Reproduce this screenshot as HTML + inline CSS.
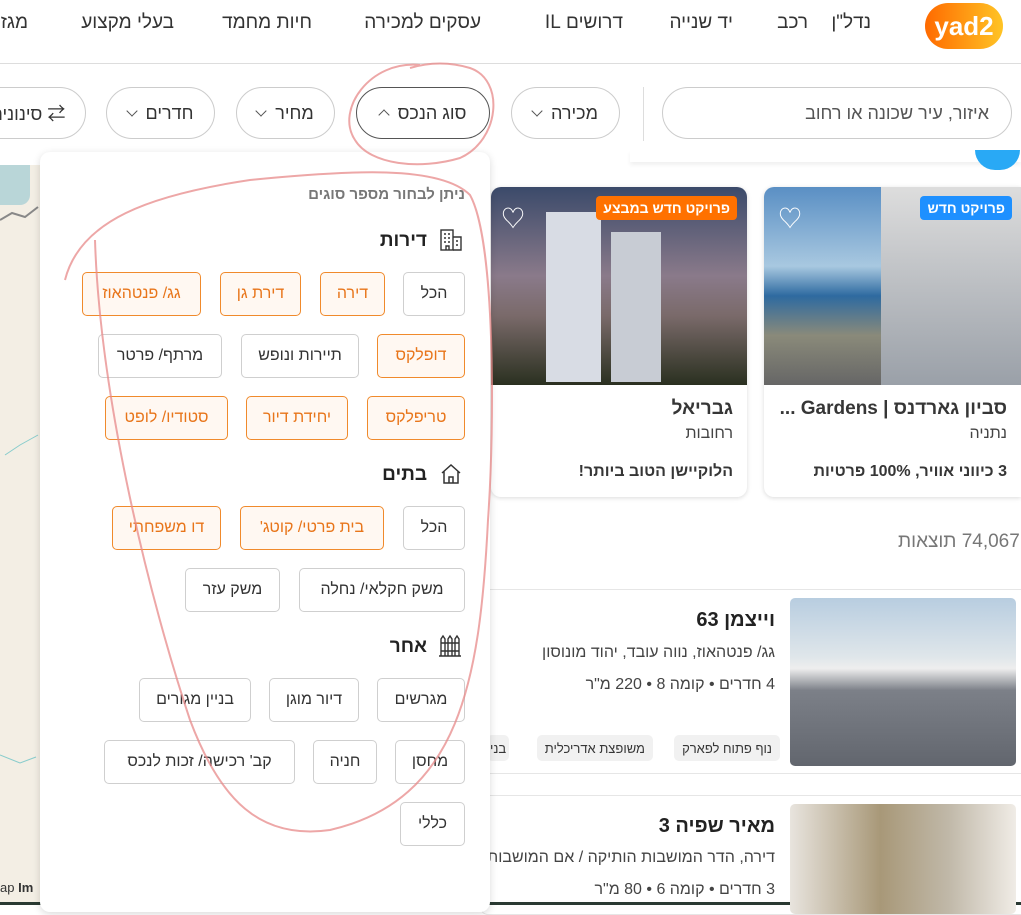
<!DOCTYPE html>
<html><head><meta charset="utf-8"><style>
*{box-sizing:border-box;margin:0;padding:0}
body{width:1021px;height:905px;overflow:hidden;position:relative;background:#fff;font-family:"Liberation Sans","Noto Sans CJK SC",sans-serif;color:#363636;direction:rtl}
.a{position:absolute}
.nav{font-size:19px;color:#333;top:12px;white-space:nowrap}
.pill{position:absolute;top:87px;height:52px;border:1px solid #ccc;border-radius:26px;font-size:18px;display:flex;align-items:center;justify-content:center;gap:10px;color:#333;background:#fff}
.chev{width:8px;height:8px;border-right:1.3px solid #555;border-bottom:1.3px solid #555;transform:rotate(45deg);margin-top:-4px}
.up{transform:rotate(-135deg);margin-top:4px}
.b{position:absolute;height:44px;border:1px solid #cfcfcf;border-radius:5px;font-size:16px;display:flex;align-items:center;justify-content:center;color:#333;background:#fff;white-space:nowrap}
.o{border-color:#f08a2c;color:#e8751a;background:#fff8f2}
.h{position:absolute;font-size:19px;font-weight:bold;color:#222}
.card{position:absolute;top:187px;height:310px;border-radius:10px;background:#fff;box-shadow:0 1px 5px rgba(0,0,0,.15);overflow:hidden}
.tag{position:absolute;top:9px;color:#fff;font-size:14px;font-weight:bold;padding:4px 7px;border-radius:4px}
.chip{position:absolute;top:735px;height:26px;background:#f1f1f1;border-radius:5px;font-size:13px;padding:0 8px;display:flex;align-items:center;white-space:nowrap}
</style></head><body>
<!-- map -->
<div class="a" style="left:0;top:165px;width:40px;height:740px;background:#f3eee4"></div>
<div class="a" style="left:0;top:165px;width:30px;height:40px;background:#b9d6d8;border-radius:0 0 10px 0"></div>
<svg class="a" style="left:0;top:165px" width="40" height="740"><path d="M0 55 L12 48 L25 52 L38 42" stroke="#888" stroke-width="2" fill="none"/><path d="M5 290 L20 280 L38 270" stroke="#8cc" fill="none"/><path d="M0 590 L20 598 L36 592" stroke="#8cc" fill="none"/></svg>
<div class="a" style="left:0;top:880px;font-size:13px;color:#333">ap <b>Im</b></div>
<div class="a" style="left:0;top:902px;width:1021px;height:3px;background:#2a3a33"></div>
<!-- top nav -->
<div class="a" style="left:0;top:63px;width:1021px;height:1px;background:#ddd"></div>
<div class="a" style="left:925px;top:3px;width:78px;height:46px;border-radius:23px;background:linear-gradient(90deg,#ff6a00,#ffc425);color:#fff;font-weight:bold;font-size:26px;direction:ltr;display:flex;align-items:center;justify-content:center">yad2</div>
<div class="a nav" style="right:150px">נדל"ן</div>
<div class="a nav" style="right:213px">רכב</div>
<div class="a nav" style="right:288px">יד שנייה</div>
<div class="a nav" style="right:398px">דרושים IL</div>
<div class="a nav" style="right:540px">עסקים למכירה</div>
<div class="a nav" style="right:709px">חיות מחמד</div>
<div class="a nav" style="right:847px">בעלי מקצוע</div>
<div class="a nav" style="right:993px">מגזין</div>
<!-- filters -->
<div class="pill" style="left:662px;width:350px;justify-content:flex-start;padding-right:22px;color:#555">איזור, עיר שכונה או רחוב</div>
<div class="a" style="left:643px;top:87px;width:1px;height:54px;background:#ddd"></div>
<div class="pill" style="left:511px;width:109px">מכירה <span class="chev"></span></div>
<div class="pill" style="left:356px;width:134px;border-color:#555">סוג הנכס <span class="chev up"></span></div>
<div class="pill" style="left:236px;width:99px">מחיר <span class="chev"></span></div>
<div class="pill" style="left:106px;width:109px">חדרים <span class="chev"></span></div>
<div class="pill" style="left:-30px;width:116px">⇄ סינונים</div>
<div class="a" style="left:630px;top:150px;width:391px;height:12px;box-shadow:0 3px 4px rgba(0,0,0,.06)"></div>
<div class="a" style="left:975px;top:150px;width:45px;height:20px;border-radius:0 0 20px 20px;background:#29a9f5"></div>
<!-- cards -->
<div class="card" style="left:764px;width:257px;border-radius:10px 0 0 10px">
<div style="height:198px;background:linear-gradient(180deg,#5a8fc4 0%,#a8c8e0 40%,#2e6aa0 55%,#8a8a7a 75%,#666 100%)"></div>
<div class="a" style="right:0;top:0;width:140px;height:198px;background:linear-gradient(180deg,#ddd,#9aa0a8)"></div>
<div class="tag" style="right:9px;background:#1e90ff">פרויקט חדש</div>
<div class="a" style="left:14px;top:12px;color:#fff;font-size:24px">♡</div>
<div class="a" style="right:14px;top:211px;font-size:19px;font-weight:bold;white-space:nowrap">סביון גארדנס | Gardens ...</div>
<div class="a" style="right:14px;top:238px;font-size:16px;color:#444">נתניה</div>
<div class="a" style="right:14px;top:276px;font-size:16px;font-weight:bold;white-space:nowrap">3 כיווני אוויר, 100% פרטיות</div>
</div>
<div class="card" style="left:491px;width:256px">
<div style="height:198px;background:linear-gradient(180deg,#3b4a6a 0%,#8a7a8a 45%,#7a6a6a 65%,#2a3020 100%)"></div>
<div class="a" style="left:55px;top:25px;width:55px;height:170px;background:#d8dce4"></div>
<div class="a" style="left:120px;top:45px;width:50px;height:150px;background:#c8ccd4"></div>
<div class="tag" style="right:10px;background:#ff7100">פרויקט חדש במבצע</div>
<div class="a" style="left:10px;top:12px;color:#fff;font-size:24px">♡</div>
<div class="a" style="right:14px;top:211px;font-size:19px;font-weight:bold">גבריאל</div>
<div class="a" style="right:14px;top:238px;font-size:16px;color:#444">רחובות</div>
<div class="a" style="right:14px;top:276px;font-size:16px;font-weight:bold">הלוקיישן הטוב ביותר!</div>
</div>
<div class="a" style="left:898px;top:531px;font-size:19px;color:#777;white-space:nowrap">74,067 תוצאות</div>
<!-- listings -->
<div class="a" style="left:480px;top:589px;width:550px;height:185px;border:1px solid #e6e6e6;border-radius:8px"></div>
<div class="a" style="left:790px;top:598px;width:226px;height:168px;border-radius:5px;background:linear-gradient(180deg,#b8cde0 0%,#dfe6ea 35%,#eee 42%,#7c8088 55%,#62666e 100%)"></div>
<div class="a" style="right:246px;top:609px;font-size:20px;font-weight:bold;color:#222">וייצמן 63</div>
<div class="a" style="right:246px;top:644px;font-size:16px;color:#444;white-space:nowrap">גג/ פנטהאוז, נווה עובד, יהוד מונוסון</div>
<div class="a" style="right:246px;top:676px;font-size:16px;color:#444">4 חדרים • קומה 8 • 220 מ"ר</div>
<div class="chip" style="right:241px">נוף פתוח לפארק</div>
<div class="chip" style="right:368px">משופצת אדריכלית</div>
<div class="chip" style="left:487px;padding:0 3px">בני</div>
<div class="a" style="left:480px;top:795px;width:550px;height:120px;border:1px solid #e6e6e6;border-radius:8px"></div>
<div class="a" style="left:790px;top:804px;width:226px;height:110px;border-radius:5px;background:linear-gradient(90deg,#e8e4de,#a89878 40%,#c0b8a8 70%,#f0ece6)"></div>
<div class="a" style="right:246px;top:815px;font-size:20px;font-weight:bold;color:#222">מאיר שפיה 3</div>
<div class="a" style="right:246px;top:849px;font-size:16px;color:#444;white-space:nowrap">דירה, הדר המושבות הותיקה / אם המושבות</div>
<div class="a" style="right:246px;top:881px;font-size:16px;color:#444">3 חדרים • קומה 6 • 80 מ"ר</div>
<!-- dropdown -->
<div class="a" style="left:40px;top:152px;width:450px;height:760px;background:#fff;border-radius:10px;box-shadow:0 2px 8px rgba(0,0,0,.15)"></div>
<div class="a" style="right:556px;top:186px;font-size:15px;color:#777;font-weight:bold">ניתן לבחור מספר סוגים</div>
<svg class="a" style="left:439px;top:228px" width="24" height="24" viewBox="0 0 24 24" fill="none" stroke="#333" stroke-width="1.4"><rect x="2" y="2" width="12" height="20"/><path d="M14 9h8v13h-8M5 6h2M9 6h2M5 10h2M9 10h2M5 14h2M9 14h2M7 22v-4h3v4M17 13h2M17 17h2"/></svg>
<div class="h" style="top:230px;right:594px">דירות</div>
<div class="b" style="left:403px;top:272px;width:62px">הכל</div>
<div class="b o" style="left:320px;top:272px;width:65px">דירה</div>
<div class="b o" style="left:220px;top:272px;width:81px">דירת גן</div>
<div class="b o" style="left:82px;top:272px;width:119px">גג/ פנטהאוז</div>
<div class="b o" style="left:377px;top:334px;width:88px">דופלקס</div>
<div class="b" style="left:241px;top:334px;width:118px">תיירות ונופש</div>
<div class="b" style="left:98px;top:334px;width:124px">מרתף/ פרטר</div>
<div class="b o" style="left:367px;top:396px;width:98px">טריפלקס</div>
<div class="b o" style="left:246px;top:396px;width:102px">יחידת דיור</div>
<div class="b o" style="left:105px;top:396px;width:123px">סטודיו/ לופט</div>
<svg class="a" style="left:440px;top:463px" width="22" height="22" viewBox="0 0 22 22" fill="none" stroke="#333" stroke-width="1.5"><path d="M2 10 L11 2 L20 10 M4 8 V20 H18 V8 M9 20 V14 H13 V20"/></svg>
<div class="h" style="top:464px;right:594px">בתים</div>
<div class="b" style="left:403px;top:506px;width:62px">הכל</div>
<div class="b o" style="left:240px;top:506px;width:144px">בית פרטי/ קוטג'</div>
<div class="b o" style="left:112px;top:506px;width:109px">דו משפחתי</div>
<div class="b" style="left:299px;top:568px;width:166px">משק חקלאי/ נחלה</div>
<div class="b" style="left:185px;top:568px;width:95px">משק עזר</div>
<svg class="a" style="left:438px;top:634px" width="24" height="24" viewBox="0 0 24 24" fill="none" stroke="#333" stroke-width="1.4"><path d="M3 22V5l2-3 2 3v17M10 22V5l2-3 2 3v17M17 22V5l2-3 2 3v17M3 9h18M3 17h18M1 22h22"/></svg>
<div class="h" style="top:636px;right:594px">אחר</div>
<div class="b" style="left:377px;top:678px;width:88px">מגרשים</div>
<div class="b" style="left:269px;top:678px;width:90px">דיור מוגן</div>
<div class="b" style="left:139px;top:678px;width:112px">בניין מגורים</div>
<div class="b" style="left:395px;top:740px;width:70px">מחסן</div>
<div class="b" style="left:313px;top:740px;width:64px">חניה</div>
<div class="b" style="left:104px;top:740px;width:191px">קב' רכישה/ זכות לנכס</div>
<div class="b" style="left:400px;top:802px;width:65px">כללי</div>
<!-- red annotation -->
<svg class="a" style="left:0;top:0;pointer-events:none" width="1021" height="905" fill="none" stroke="#e88a8a" stroke-width="2" opacity=".75">
<path d="M420 65 C370 60 335 110 355 140 C370 165 420 170 460 158 C500 140 505 80 470 68 C450 62 430 62 410 68"/>
<path d="M65 280 C80 220 150 195 250 180 C350 170 440 165 470 195 C495 240 495 420 488 520 C480 680 460 800 330 830 C260 840 220 800 190 720 C150 600 100 400 95 240"/>
</svg>
</body></html>
